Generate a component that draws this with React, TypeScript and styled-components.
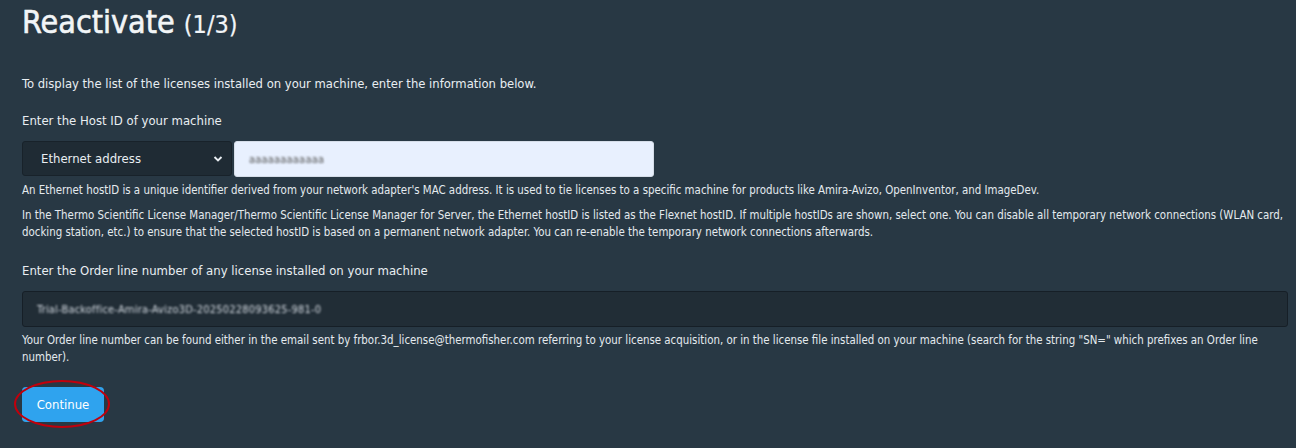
import React from "react";
import styled, { createGlobalStyle } from "styled-components";

const GlobalStyle = createGlobalStyle`
    html, body {
        margin: 0;
        padding: 0;
        background: #283844;
    }
    body {
        font-family: "DejaVu Sans Condensed", "DejaVu Sans", sans-serif;
        color: #e9eef2;
    }
`;

const Page = styled.div`
    width: 1296px;
    height: 448px;
    box-sizing: border-box;
    padding: 0 8px 0 22px;
    overflow: hidden;
`;

const Title = styled.h1`
    margin: 0;
    padding-top: 2px;
    font-size: 32px;
    font-weight: 500;
    line-height: 40px;
    color: #f2f5f7;
    -webkit-text-stroke: 0.6px #f2f5f7;

    small {
        font-size: 25px;
        font-weight: 400;
        -webkit-text-stroke: 0.2px #f2f5f7;
    }
`;

const Intro = styled.p`
    margin: 30px 0 0;
    font-size: 12.9px;
    line-height: 18px;
`;

const Label = styled.div<{ $gap?: number }>`
    margin-top: ${(p) => p.$gap ?? 19}px;
    font-size: 13px;
    line-height: 18px;
`;

const Row = styled.div`
    display: flex;
    gap: 2px;
    margin-top: 11px;
`;

const SelectBox = styled.div`
    position: relative;
    width: 210px;
    height: 35px;
    box-sizing: border-box;
    display: flex;
    align-items: center;
    padding-left: 18px;
    background: #1f2b34;
    border: 1px solid #18222a;
    border-radius: 3px;
    font-size: 13px;

    svg {
        position: absolute;
        right: 8px;
        top: 13px;
    }
`;

const Field = styled.div<{ $light?: boolean; $width?: string }>`
    width: ${(p) => p.$width ?? "auto"};
    flex: ${(p) => (p.$width ? "none" : "1")};
    height: 36px;
    box-sizing: border-box;
    display: flex;
    align-items: center;
    padding-left: 14px;
    background: ${(p) => (p.$light ? "#e8f0fe" : "#212d36")};
    border: 1px solid ${(p) => (p.$light ? "#d5dde8" : "#161f27")};
    border-radius: 3px;
    font-size: 11px;
`;

const Blurred = styled.span<{ $dark?: boolean }>`
    color: ${(p) => (p.$dark ? "#555" : "#d3d9e0")};
    filter: blur(1.2px);
    letter-spacing: 0.2px;
`;

const Help = styled.p<{ $gap?: number }>`
    margin: ${(p) => p.$gap ?? 6}px 0 0;
    font-size: 11.4px;
    line-height: 17px;
    color: #e4eaee;
`;

const ButtonWrap = styled.div`
    position: relative;
    margin-top: 21px;
    width: 82px;
`;

const Button = styled.button`
    width: 82px;
    height: 35px;
    border: none;
    border-radius: 4px;
    background: #2fa3ee;
    color: #ffffff;
    font-family: inherit;
    font-size: 13px;
`;

const Ring = styled.div`
    position: absolute;
    left: -8px;
    top: -7px;
    width: 96px;
    height: 48px;
    box-sizing: border-box;
    border: 2px solid #c0000c;
    border-radius: 50%;
    pointer-events: none;
`;

export default function App() {
    return (
        <>
            <GlobalStyle />
            <Page>
                <Title>
                    Reactivate <small>(1/3)</small>
                </Title>
                <Intro>
                    To display the list of the licenses installed on your machine, enter the
                    information below.
                </Intro>

                <Label>Enter the Host ID of your machine</Label>
                <Row>
                    <SelectBox>
                        Ethernet address
                        <svg width="10" height="8" viewBox="0 0 10 8">
                            <path
                                d="M1.5 2 L5 5.5 L8.5 2"
                                fill="none"
                                stroke="#e9eef2"
                                strokeWidth="1.9"
                            />
                        </svg>
                    </SelectBox>
                    <Field $light $width="420px">
                        <Blurred $dark>aaaaaaaaaaaa</Blurred>
                    </Field>
                </Row>
                <Help $gap={5}>
                    An Ethernet hostID is a unique identifier derived from your network adapter's
                    MAC address. It is used to tie licenses to a specific machine for products like
                    Amira-Avizo, OpenInventor, and ImageDev.
                </Help>
                <Help $gap={8}>
                    In the Thermo Scientific License Manager/Thermo Scientific License Manager for
                    Server, the Ethernet hostID is listed as the Flexnet hostID. If multiple
                    hostIDs are shown, select one. You can disable all temporary network
                    connections (WLAN card, docking station, etc.) to ensure that the selected
                    hostID is based on a permanent network adapter. You can re-enable the
                    temporary network connections afterwards.
                </Help>

                <Label $gap={21}>
                    Enter the Order line number of any license installed on your machine
                </Label>
                <Row>
                    <Field>
                        <Blurred>Trial-Backoffice-Amira-Avizo3D-20250228093625-981-0</Blurred>
                    </Field>
                </Row>
                <Help $gap={5}>
                    Your Order line number can be found either in the email sent by
                    frbor.3d_license@thermofisher.com referring to your license acquisition, or in
                    the license file installed on your machine (search for the string "SN=" which
                    prefixes an Order line number).
                </Help>

                <ButtonWrap>
                    <Button>Continue</Button>
                    <Ring />
                </ButtonWrap>
            </Page>
        </>
    );
}
